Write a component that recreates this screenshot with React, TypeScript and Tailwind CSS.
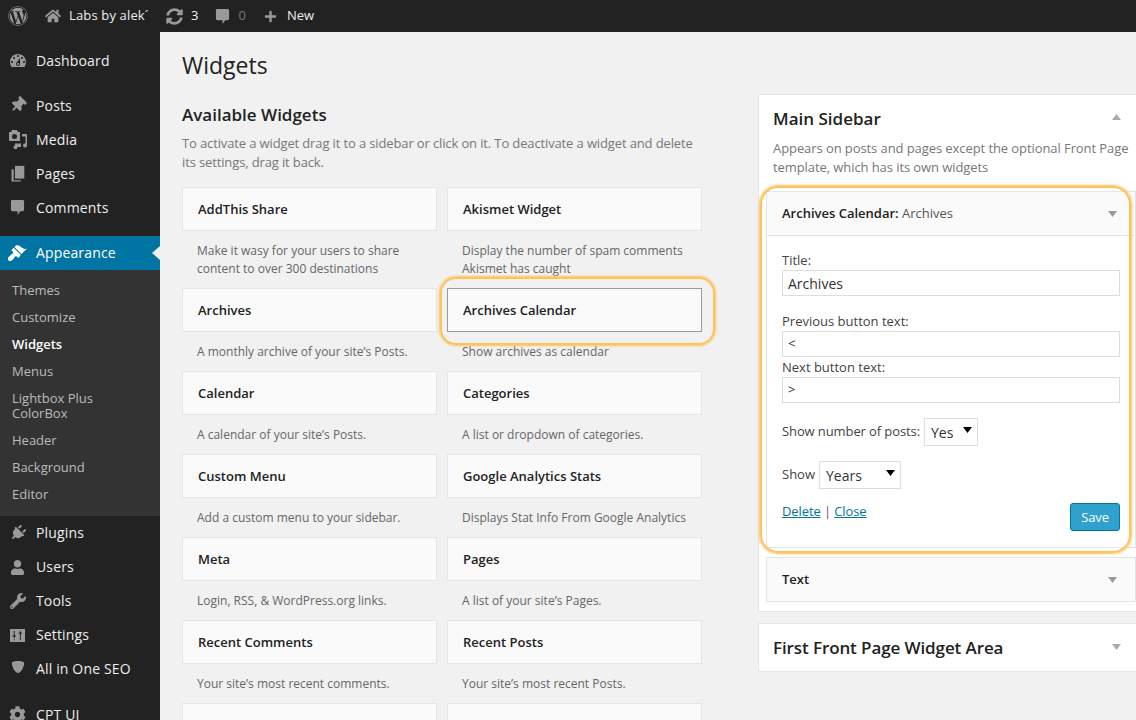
import React from "react";
import { FaWordpress, FaHome, FaSyncAlt, FaPlus, FaThumbtack, FaPlug, FaUser, FaWrench, FaCog } from "react-icons/fa";

type IC = { className?: string };

const Gauge = ({ className }: IC) => (
  <svg viewBox="0 0 20 20" className={className} fill="currentColor">
    <path d="M3.760 16h12.480c1.100-1.370 1.760-3.110 1.760-5 0-4.420-3.580-8-8-8s-8 3.580-8 8c0 1.890.66 3.630 1.760 5zM10 4c.55 0 1 .45 1 1s-.45 1-1 1-1-.45-1-1 .45-1 1-1zM6 6c.55 0 1 .45 1 1s-.45 1-1 1-1-.45-1-1 .45-1 1-1zm8 0c.55 0 1 .45 1 1s-.45 1-1 1-1-.45-1-1 .45-1 1-1zm-5.370 5.550L12 7v6c0 1.100-.9 2-2 2s-2-.9-2-2c0-.57.25-1.100.63-1.450zM4 10c.55 0 1 .45 1 1s-.45 1-1 1-1-.45-1-1 .45-1 1-1zm12 0c.55 0 1 .45 1 1s-.45 1-1 1-1-.45-1-1 .45-1 1-1zm-5 3c0-.55-.45-1-1-1s-1 .45-1 1 .45 1 1 1 1-.45 1-1z" />
  </svg>
);
const Brush = ({ className }: IC) => (
  <svg viewBox="0 0 20 20" className={className} fill="currentColor">
    <path d="M14.480 11.060L7.410 3.990l1.500-1.500c.5-.56 2.300-.47 3.510.32 1.210.8 1.430 1.280 2.910 2.100 1.180.64 2.450 1.260 4.450.85zm-.71.71L6.700 4.700 4.930 6.470c-.39.39-.39 1.020 0 1.410l1.060 1.060c.39.39.39 1.030 0 1.420-.6.6-1.430 1.110-2.210 1.690-.35.26-.7.53-1.010.84C1.430 13.710 1 14.650 1 15.650c0 .25.02.5.08.75.09.48.35.9.71 1.230.3.23.79.37 1.180.37 1 0 1.940-.43 2.740-1.270.31-.31.58-.66.84-1.010.58-.78 1.090-1.610 1.690-2.210.39-.39 1.030-.39 1.420 0l1.060 1.060c.39.39 1.020.39 1.410 0z" />
  </svg>
);
const Media = ({ className }: IC) => (
  <svg viewBox="0 0 20 20" className={className} fill="currentColor">
    <path fillRule="evenodd" d="M4 1h5l1 2h2v9H1V3h2zM6.500 5a2.500 2.500 0 1 0 0 5 2.500 2.500 0 0 0 0-5z" />
    <path d="M14 5h5v11.500a2 2 0 1 1-1.500-1.900V7.500H14zM7 14.500h6v3.500H9.500a2 2 0 1 1-2.500-1.800z" />
  </svg>
);
const Pages = ({ className }: IC) => (
  <svg viewBox="0 0 20 20" className={className} fill="currentColor">
    <path d="M7 1h11v15H7z" />
    <path d="M3 5h2.500v13H14v1.500H3z" />
  </svg>
);
const Bubble = ({ className }: IC) => (
  <svg viewBox="0 0 16 18" className={className} fill="currentColor">
    <path d="M2.500 1h11A1.500 1.500 0 0 1 15 2.500v9a1.500 1.500 0 0 1-1.500 1.500H11l-3 4v-4H2.500A1.500 1.500 0 0 1 1 11.500v-9A1.500 1.500 0 0 1 2.500 1z" />
  </svg>
);
const Settings = ({ className }: IC) => (
  <svg viewBox="0 0 16 16" className={className} fill="currentColor">
    <path fillRule="evenodd" d="M0 1h16v14H0zM4 3v5H2.500l2 3 2-3H5V3zM11 3 9 6h1.500v7h1V6H13zM4 12h1v1H4z" />
  </svg>
);
const Shield = ({ className }: IC) => (
  <svg viewBox="0 0 16 16" className={className} fill="currentColor">
    <path d="M8 1c2.500 0 5 .6 7 1.500C15 8 12.500 13 8 15 3.500 13 1 8 1 2.500 3 1.600 5.500 1 8 1z" />
  </svg>
);

const Tri = ({ up, className }: { up?: boolean; className?: string }) => (
  <svg viewBox="0 0 8 6" className={"w-[9px] h-[6px] " + (className ?? "")} fill="currentColor" preserveAspectRatio="none">
    {up ? <path d="M4 0l4 6H0z" /> : <path d="M0 0h8L4 6z" />}
  </svg>
);

type MI = { label: string; Icon: React.ComponentType<IC>; cls: string; lift?: boolean };

const MenuRow = ({ label, Icon, cls, lift }: MI) => (
  <div className="h-[34px] flex items-center text-[14px] tracking-[0.15px] text-[#eeeeee]">
    <span className="w-[36px] flex justify-center pl-[1px] text-[#999999] shrink-0 pr-[2px]">
      <Icon className={cls} />
    </span>
    <span className={lift ? "pb-[2px]" : ""}>{label}</span>
  </div>
);

const top1: MI[] = [
  { label: "Posts", Icon: FaThumbtack, cls: "w-[16px] h-[16px] rotate-45" },
  { label: "Media", Icon: Media, cls: "w-[20px] h-[20px]" },
  { label: "Pages", Icon: Pages, cls: "w-[17px] h-[17px]" },
  { label: "Comments", Icon: Bubble, cls: "w-[15px] h-[17px]" },
];
const top2: MI[] = [
  { label: "Plugins", Icon: FaPlug, cls: "w-[16px] h-[16px] rotate-45", lift: true },
  { label: "Users", Icon: FaUser, cls: "w-[15px] h-[15px]", lift: true },
  { label: "Tools", Icon: FaWrench, cls: "w-[16px] h-[16px]", lift: true },
  { label: "Settings", Icon: Settings, cls: "w-[15px] h-[15px]", lift: true },
  { label: "All in One SEO", Icon: Shield, cls: "w-[14px] h-[14px] -translate-y-[2px]", lift: true },
];
const subs = ["Themes", "Customize", "Widgets", "Menus", "Lightbox Plus ColorBox", "Header", "Background", "Editor"];

const widgets: [string, string, string, string][] = [
  ["AddThis Share", "Make it wasy for your users to share content to over 300 destinations", "Akismet Widget", "Display the number of spam comments Akismet has caught"],
  ["Archives", "A monthly archive of your site’s Posts.", "Archives Calendar", "Show archives as calendar"],
  ["Calendar", "A calendar of your site’s Posts.", "Categories", "A list or dropdown of categories."],
  ["Custom Menu", "Add a custom menu to your sidebar.", "Google Analytics Stats", "Displays Stat Info From Google Analytics"],
  ["Meta", "Login, RSS, & WordPress.org links.", "Pages", "A list of your site’s Pages."],
  ["Recent Comments", "Your site’s most recent comments.", "Recent Posts", "Your site’s most recent Posts."],
  ["", "", "", ""],
];

const Widget = ({ title, desc }: { title: string; desc: string }) => (
  <div>
    <div
      className={
        "h-[44px] flex items-center px-[15px] pt-[2px] bg-[#fafafa] text-[13px] font-semibold text-[#222222] border " +
        (title === "Archives Calendar" ? "border-[#999999]" : "border-[#e5e5e5]")
      }
    >
      {title}
    </div>
    <div className="pt-[11px] pb-[10px] text-[12px] leading-[18px] text-[#666666] px-[15px]">{desc}</div>
  </div>
);

const Field = ({ label, value, mono }: { label: string; value: string; mono?: boolean }) => (
  <div>
    <div className="text-[13px] leading-[18px] text-[#444444]">{label}</div>
    <div className={"mt-[1px] h-[26px] w-full border border-[#dddddd] bg-white flex items-center px-[5px] text-[#333333] " + (mono ? "text-[13px]" : "text-[14px]")}>
      {value}
    </div>
  </div>
);

const Select = ({ value, w }: { value: string; w: string }) => (
  <div className={"h-[28px] border border-[#dddddd] bg-white flex items-center justify-between pl-[6px] pr-[5px] text-[14px] text-[#333333] tracking-normal " + w}>
    <span className="pt-[1px]">{value}</span>
    <Tri className="text-black -translate-y-[2px]" />
  </div>
);

export default function App() {
  return (
    <div className="relative w-[1136px] h-[720px] overflow-hidden bg-[#f1f1f1] font-['Open_Sans',sans-serif]">
      <div className="h-[32px] bg-[#222222] flex items-center text-[13px] text-[#eeeeee] font-normal">
        <FaWordpress className="ml-[8px] w-[20px] h-[20px] text-[#999999]" />
        <FaHome className="ml-[17px] w-[16px] h-[16px] text-[#999999]" />
        <span className="ml-[8px] w-[90px] whitespace-nowrap tracking-[0.15px]">Labs by alek´</span>
        <FaSyncAlt className="ml-[7px] w-[17px] h-[17px] text-[#999999]" />
        <span className="ml-[8px]">3</span>
        <Bubble className="ml-[17px] w-[15px] h-[17px] text-[#999999]" />
        <span className="ml-[8px] text-[#777777]">0</span>
        <FaPlus className="ml-[18px] w-[13px] h-[13px] text-[#999999]" />
        <span className="ml-[10px]">New</span>
      </div>

      <div className="flex h-[688px]">
        <aside className="w-[160px] shrink-0 bg-[#222222] pt-[12px]">
          <MenuRow label="Dashboard" Icon={Gauge} cls="w-[20px] h-[20px]" lift />
          <div className="h-[10px]" />
          {top1.map((m) => <MenuRow key={m.label} {...m} />)}
          <div className="h-[12px]" />
          <div className="relative h-[34px] bg-[#0074a2] flex items-center text-[14px] tracking-[0.15px] text-white">
            <span className="w-[36px] flex justify-center shrink-0 pr-[2px]">
              <Brush className="w-[20px] h-[20px]" />
            </span>
            <span className="pb-[2px]">Appearance</span>
            <span className="absolute right-0 top-[10px] border-y-[7px] border-r-[8px] border-y-transparent border-r-[#f1f1f1]" />
          </div>
          <div className="bg-[#333333] py-[7px] h-[246px] text-[13px] text-[#bbbbbb]">
            {subs.map((s) =>
              s === "Lightbox Plus ColorBox" ? (
                <div key={s} className="px-[12px] py-[6px] leading-[15px]">Lightbox Plus<br />ColorBox</div>
              ) : (
                <div key={s} className={"px-[12px] py-[4px] leading-[19px] " + (s === "Widgets" ? "font-semibold text-white" : "")}>{s}</div>
              )
            )}
          </div>
          {top2.map((m) => <MenuRow key={m.label} {...m} />)}
          <div className="h-[11px]" />
          <MenuRow label="CPT UI" Icon={FaCog} cls="w-[17px] h-[17px]" />
        </aside>

        <main className="flex-1 flex min-w-0 pl-[22px]">
          <section className="w-[520px] shrink-0 pt-[17px]">
            <h1 className="text-[23px] leading-[32px] text-[#222222]">Widgets</h1>
            <h2 className="mt-[22px] text-[17px] leading-[24px] font-semibold text-[#222222]">Available Widgets</h2>
            <p className="mt-[7px] text-[13px] leading-[19px] tracking-[-0.13px] text-[#777777]">
              To activate a widget drag it to a sidebar or click on it. To deactivate a widget and delete its settings, drag it back.
            </p>
            <div className="mt-[15px] grid grid-cols-2 gap-x-[10px]">
              {widgets.flatMap((r, i) => [
                <Widget key={i + "a"} title={r[0]} desc={r[1]} />,
                <Widget key={i + "b"} title={r[2]} desc={r[3]} />,
              ])}
            </div>
          </section>

          <section className="ml-[56px] w-[386px] shrink-0 pt-[62px]">
            <div className="bg-white border border-[#e5e5e5] pl-[7px] pt-[13px] pb-[9px]">
              <div className="flex items-center justify-between pl-[7px] pr-[22px]">
                <h3 className="text-[17px] leading-[22px] font-semibold text-[#222222]">Main Sidebar</h3>
                <Tri up className="text-[#aaaaaa] -translate-y-[2px]" />
              </div>
              <p className="mt-[9px] pl-[7px] pr-[6px] text-[13px] leading-[19px] tracking-[-0.08px] text-[#777777]">
                Appears on posts and pages except the optional Front Page template, which has its own widgets
              </p>
              <div className="mt-[14px] w-[370px] border border-[#e5e5e5] bg-white">
                <div className="h-[44px] bg-[#fafafa] border-b border-[#e5e5e5] flex items-center justify-between pl-[15px] pr-[18px] text-[13px] font-semibold text-[#222222]">
                  <span>Archives Calendar: <span className="font-medium text-[#555555]">Archives</span></span>
                  <Tri className="text-[#999999]" />
                </div>
                <div className="pl-[15px] pr-[15px] pt-[15px] h-[311px]">
                  <Field label="Title:" value="Archives" />
                  <div className="mt-[16px]"><Field label="Previous button text:" value="<" mono /></div>
                  <div className="mt-[1px]"><Field label="Next button text:" value=">" mono /></div>
                  <div className="mt-[15px] flex items-center gap-[4px] text-[13px] tracking-[-0.1px] text-[#444444]">
                    Show number of posts:
                    <Select value="Yes" w="w-[54px]" />
                  </div>
                  <div className="mt-[15px] flex items-center gap-[4px] text-[13px] text-[#444444]">
                    Show
                    <Select value="Years" w="w-[82px]" />
                  </div>
                  <div className="mt-[13px] flex justify-between items-start text-[13px] leading-[18px] tracking-[-0.1px] text-[#444444]">
                    <span>
                      <a className="text-[#0074a2] underline">Delete</a>
                      <span className="text-[#7a4a8a]"> | </span>
                      <a className="text-[#0074a2] underline">Close</a>
                    </span>
                    <button className="w-[50px] h-[28px] mt-[1px] bg-[#2ea2cc] border border-[#0074a2] rounded-[3px] text-[13px] text-white">Save</button>
                  </div>
                </div>
              </div>
              <div className="mt-[9px] w-[370px] h-[45px] border border-[#e5e5e5] bg-[#fafafa] flex items-center justify-between pl-[15px] pr-[18px] text-[13px] font-semibold text-[#222222]">
                Text
                <Tri className="text-[#999999]" />
              </div>
            </div>
            <div className="mt-[11px] h-[49px] bg-white border border-[#e5e5e5] flex items-center pl-[14px] justify-between pr-[22px]">
              <h3 className="text-[17px] tracking-[-0.1px] font-semibold text-[#222222]">First Front Page Widget Area</h3>
              <Tri className="text-[#aaaaaa] -translate-y-[1px]" />
            </div>
          </section>
        </main>
      </div>

      <div className="absolute left-[440px] top-[277px] w-[275px] h-[68px] rounded-[16px] border-2 border-[#fdc35f] shadow-[0_0_2px_1px_#fdc35f] pointer-events-none" />
      <div className="absolute left-[760px] top-[186px] w-[371px] h-[367px] rounded-[18px] border-2 border-[#fdc35f] shadow-[0_0_2px_1px_#fdc35f] pointer-events-none" />
    </div>
  );
}
